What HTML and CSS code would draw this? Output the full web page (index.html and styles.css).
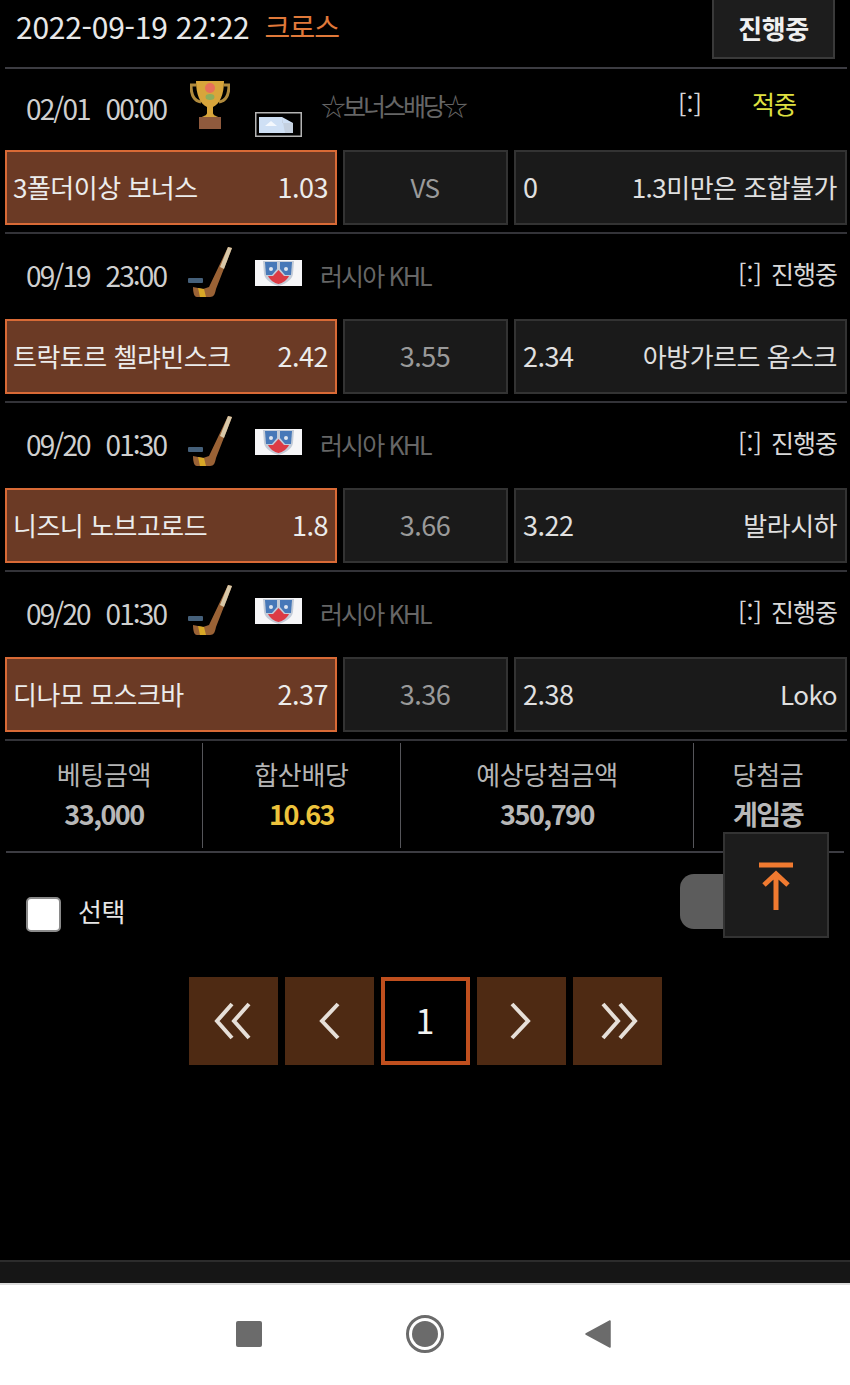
FILE: index.html
```html
<!DOCTYPE html>
<html lang="ko">
<head>
<meta charset="utf-8">
<title>베팅내역</title>
<link rel="stylesheet" href="styles.css">
</head>
<body>
<svg class="defs" width="0" height="0" aria-hidden="true">
  <defs>
    <filter id="soft"><feGaussianBlur stdDeviation="0.6"/></filter>
    <symbol id="stick" viewBox="0 0 46 54">
      <g filter="url(#soft)">
        <rect x="0" y="31" width="15" height="5" rx="1" fill="#45607a"/>
        <path d="M40 0 L44 1 L28 42 C27 47 26 50 22 50 L9 50 C6 50 5 45 5 40 L15 42 L21 40 Z" fill="#9a6236"/>
        <path d="M40 0 L44 1 L36 22 L32 20 Z" fill="#d8c8a8"/>
        <path d="M10 41 L16 42 L18 50 L12 50 Z" fill="#d8a828"/>
      </g>
    </symbol>
    <symbol id="khl" viewBox="0 0 47 26">
      <rect width="47" height="26" fill="#f6f6f8"/>
      <g filter="url(#soft)">
        <path d="M8 1 L39 1 L38 14 C37 20 30 24 23.500 26 C17 24 10 20 9 14 Z" fill="#c4ccd8"/>
        <path d="M10 2 L22 2 L22 9 L17 15 L11 15 Z" fill="#4678b8"/>
        <path d="M25 2 L37 2 L36 15 L30 15 L25 9 Z" fill="#4678b8"/>
        <path d="M13 16 L18 16 L23.500 10 L29 16 L34 16 C32 20 28 23 23.500 24 C19 23 15 20 13 16 Z" fill="#dc3b45"/>
        <circle cx="16" cy="9" r="2" fill="#dfe6f0"/>
        <circle cx="31" cy="9" r="2" fill="#dfe6f0"/>
      </g>
    </symbol>
  </defs>
</svg>
<div class="screen">
  <main class="page">
    <header class="top">
      <div class="top-title"><span class="stamp">2022-09-19 22:22</span><span class="kind">크로스</span></div>
      <div class="state-btn">진행중</div>
    </header>

    <section class="game game-bonus">
      <div class="meta">
        <span class="when">02/01&nbsp; 00:00</span>
        <svg class="sport trophy" viewBox="0 0 40 50" aria-hidden="true">
          <g filter="url(#soft)">
            <path d="M6 5 H1 C1 15 4 21 11 22 M34 5 H39 C39 15 36 21 29 22" fill="none" stroke="#b08a3c" stroke-width="3"/>
            <path d="M6 1 H34 C34 14 30 24 23 27 L23 33 C23 35 26 36 28 37 H12 C14 36 17 35 17 33 L17 27 C10 24 6 14 6 1 Z" fill="#d8a53a"/>
            <circle cx="20" cy="8" r="5" fill="#e8705a"/>
            <ellipse cx="20" cy="17" rx="4.500" ry="3" fill="#8cae5c"/>
            <rect x="9" y="37" width="22" height="12" fill="#8f5a3e"/>
          </g>
        </svg>
        <svg class="flag flag-broken" viewBox="0 0 47 25" aria-hidden="true">
          <rect x="0.750" y="0.750" width="45.500" height="23.500" fill="#000" stroke="#b4b4b4" stroke-width="1.500"/>
          <g filter="url(#soft)">
            <path d="M4 5 H27 L38 11 V21 H4 Z" fill="#cfe0f5"/>
            <path d="M27 5 L27 11 L38 11 L38 21 L30 21 Z" fill="#bcc4d0" opacity="0.600"/>
            <path d="M10 14 L16 9 L22 14 Z" fill="#f4f8fd"/>
          </g>
        </svg>
        <span class="league league-bonus">☆보너스배당☆</span>
        <span class="score score-bonus">[:]</span>
        <span class="status status-hit">적중</span>
      </div>
      <div class="odds">
        <div class="cell cell-home"><span>3폴더이상 보너스</span><span class="num">1.03</span></div>
        <div class="cell cell-draw">VS</div>
        <div class="cell cell-away"><span class="num">0</span><span>1.3미만은 조합불가</span></div>
      </div>
    </section>

    <section class="game">
      <div class="meta">
        <span class="when">09/19&nbsp; 23:00</span>
        <svg class="sport stick" aria-hidden="true"><use href="#stick"/></svg>
        <svg class="flag" aria-hidden="true"><use href="#khl"/></svg>
        <span class="league">러시아 KHL</span>
        <span class="score">[:]</span>
        <span class="status">진행중</span>
      </div>
      <div class="odds">
        <div class="cell cell-home"><span>트락토르 첼랴빈스크</span><span class="num">2.42</span></div>
        <div class="cell cell-draw num">3.55</div>
        <div class="cell cell-away"><span class="num">2.34</span><span>아방가르드 옴스크</span></div>
      </div>
    </section>

    <section class="game">
      <div class="meta">
        <span class="when">09/20&nbsp; 01:30</span>
        <svg class="sport stick" aria-hidden="true"><use href="#stick"/></svg>
        <svg class="flag" aria-hidden="true"><use href="#khl"/></svg>
        <span class="league">러시아 KHL</span>
        <span class="score">[:]</span>
        <span class="status">진행중</span>
      </div>
      <div class="odds">
        <div class="cell cell-home"><span>니즈니 노브고로드</span><span class="num">1.8</span></div>
        <div class="cell cell-draw num">3.66</div>
        <div class="cell cell-away"><span class="num">3.22</span><span>발라시하</span></div>
      </div>
    </section>

    <section class="game">
      <div class="meta">
        <span class="when">09/20&nbsp; 01:30</span>
        <svg class="sport stick" aria-hidden="true"><use href="#stick"/></svg>
        <svg class="flag" aria-hidden="true"><use href="#khl"/></svg>
        <span class="league">러시아 KHL</span>
        <span class="score">[:]</span>
        <span class="status">진행중</span>
      </div>
      <div class="odds">
        <div class="cell cell-home"><span>디나모 모스크바</span><span class="num">2.37</span></div>
        <div class="cell cell-draw num">3.36</div>
        <div class="cell cell-away"><span class="num">2.38</span><span>Loko</span></div>
      </div>
    </section>

    <section class="summary">
      <div class="sum"><div class="sum-label">베팅금액</div><div class="sum-value">33,000</div></div>
      <div class="sum"><div class="sum-label">합산배당</div><div class="sum-value sum-gold">10.63</div></div>
      <div class="sum"><div class="sum-label">예상당첨금액</div><div class="sum-value">350,790</div></div>
      <div class="sum"><div class="sum-label">당첨금</div><div class="sum-value">게임중</div></div>
    </section>

    <section class="actions">
      <label class="pick"><span class="box"></span><span class="pick-text">선택</span></label>
      <div class="toggle"></div>
    </section>

    <nav class="pager">
      <div class="pg"><svg viewBox="0 0 36 36" aria-hidden="true"><path d="M17 1 L2 18 L17 35 M34 1 L19 18 L34 35"/></svg></div>
      <div class="pg"><svg viewBox="0 0 36 36" aria-hidden="true"><path d="M27 1 L11 18 L27 35"/></svg></div>
      <div class="pg pg-on">1</div>
      <div class="pg"><svg viewBox="0 0 36 36" aria-hidden="true"><path d="M9 1 L25 18 L9 35"/></svg></div>
      <div class="pg"><svg viewBox="0 0 36 36" aria-hidden="true"><path d="M4 1 L19 18 L4 35 M21 1 L36 18 L21 35"/></svg></div>
    </nav>

    <div class="totop">
      <svg viewBox="0 0 36 50" aria-hidden="true">
        <path d="M1 5 H35 M18 50 V16 M6 25 L18 14 L30 25"/>
      </svg>
    </div>
  </main>
  <div class="footer-bar"></div>
  <div class="android-nav">
    <svg class="nav-ico" viewBox="0 0 26 26" aria-hidden="true"><rect width="26" height="26" rx="2" fill="#6b6b6b"/></svg>
    <svg class="nav-ico nav-home" viewBox="0 0 40 40" aria-hidden="true"><circle cx="20" cy="20" r="17.500" fill="none" stroke="#6b6b6b" stroke-width="3"/><circle cx="20" cy="20" r="13" fill="#6b6b6b"/></svg>
    <svg class="nav-ico nav-back" viewBox="0 0 26 30" aria-hidden="true"><path d="M25 2 V28 L1 15 Z" fill="#6b6b6b" stroke="#6b6b6b" stroke-width="1.500" stroke-linejoin="round"/></svg>
  </div>
</div>
</body>
</html>
```

FILE: styles.css
```css
* { box-sizing: border-box; }
html, body { margin: 0; padding: 0; background: #000; }
body { font-family: "Noto Sans CJK KR", "Noto Sans", sans-serif; color: #e6e6e6; }
.defs { position: absolute; }
.screen { width: 850px; height: 1385px; display: flex; flex-direction: column; overflow: hidden; }
.page { position: relative; flex: 1; background: #000; padding: 0 3px 0 5px; }

.top { height: 69px; display: flex; justify-content: space-between; border-bottom: 2px solid #3c3c42; padding-right: 12px; }
.top-title { display: flex; gap: 15px; align-items: center; height: 52px; padding-left: 11px; }
.stamp { color: #e8e8e8; font-size: 30px; letter-spacing: -0.25px; }
.kind { color: #e0793a; font-size: 28px; letter-spacing: -0.8px; }
.state-btn { width: 123px; height: 59px; display: flex; align-items: center; justify-content: center; padding-bottom: 2px; background: #1d1d1d; border: 2px solid #3a3a3a; border-top: 0; color: #f0f0f0; font-size: 26px; font-weight: 700; letter-spacing: -0.5px; }

.game { border-bottom: 2px solid #333338; padding-bottom: 7px; }
.meta { height: 85px; display: flex; align-items: center; padding: 0 10px 3px 21px; }
.game-bonus .meta { height: 81px; }
.when { width: 162px; font-size: 28px; letter-spacing: -1.9px; word-spacing: 2px; color: #cfcfcf; flex: none; }
.sport { flex: none; }
.trophy { width: 40px; height: 50px; margin: -7px 0 0 2px; }
.stick { width: 46px; height: 54px; margin: -2px 0 0 0; }
.flag { width: 47px; height: 26px; margin: -5px 0 0 21px; flex: none; }
.trophy + .flag { height: 25px; margin: 32px 0 0 25px; }
.league { margin-left: 18px; font-size: 25px; letter-spacing: -1.9px; color: #666; }
.league-bonus { margin-left: 19px; margin-top: -6px; letter-spacing: -3px; }
.score { margin-left: auto; margin-top: -4px; font-size: 25px; color: #d8d8d8; }
.status { margin-left: 9px; margin-top: -4px; font-size: 25px; letter-spacing: -1px; color: #d8d8d8; }
.score-bonus { margin-right: 50px; margin-top: -11px; }
.status-hit { color: #dfe040; margin-right: 41px; margin-left: 0; margin-top: -11px; }

.odds { display: grid; grid-template-columns: 332px 165px 333px; gap: 6px; }
.cell { height: 75px; display: flex; align-items: center; justify-content: space-between; padding: 0 8px 2px 7px; font-size: 26px; letter-spacing: -0.5px; background: #1a1a1a; border: 2px solid #333; color: #e0e0e0; }
.num { font-size: 27px; }
.cell-home { padding: 0 7px 2px 6px; background: #6b3a25; border-color: #d96a36; color: #ececec; }
.cell-draw { justify-content: center; color: #9a9a9a; }

.summary { display: grid; grid-template-columns: 197px 198px 293px 151px; margin: 2px 3px 0 1px; border-bottom: 2px solid #3c3c42; height: 110px; }
.sum { height: 105px; padding-top: 11px; text-align: center; border-right: 1px solid #55555a; }
.sum:last-child { border-right: 0; padding-right: 3px; }
.sum-label { font-size: 26px; line-height: 40px; letter-spacing: -0.3px; color: #b5b5b5; }
.sum-value { font-size: 27px; line-height: 39px; font-weight: 700; letter-spacing: -1.5px; color: #b8b8b8; }
.sum-gold { color: #edc33c; }

.actions { height: 124px; display: flex; align-items: flex-start; justify-content: space-between; padding-left: 21px; }
.pick { display: flex; align-items: center; gap: 17px; margin-top: 39px; font-size: 26px; letter-spacing: -0.5px; color: #e6e6e6; }
.pick-text { padding-bottom: 8px; }
.box { width: 35px; height: 35px; border-radius: 5px; background: #fff; border: 2px solid #8a8a8a; }
.toggle { width: 145px; height: 55px; margin: 21px 22px 0 0; border-radius: 14px; background: #5c5c5c; }

.pager { display: flex; justify-content: center; gap: 7px; padding-right: 2px; }
.pg { width: 89px; height: 88px; display: flex; align-items: center; justify-content: center; background: #4e2a13; color: #f2f2f2; font-size: 34px; }
.pg svg { width: 36px; height: 36px; fill: none; stroke: #e6dfd8; stroke-width: 4; overflow: visible; }
.pg-on { background: #000; border: 4px solid #bf4f1e; padding-bottom: 4px; }

.totop { position: absolute; left: 723px; top: 832px; width: 106px; height: 106px; display: flex; align-items: center; justify-content: center; background: #1c1c1c; border: 2px solid #333; }
.totop svg { width: 36px; height: 50px; fill: none; stroke: #f07a30; stroke-width: 5; }

.footer-bar { height: 23px; flex: none; background: #161616; border-top: 2px solid #2c2c2c; }
.android-nav { height: 102px; flex: none; display: flex; align-items: center; justify-content: center; gap: 143px; padding: 0 4px 2px 0; background: #fff; border-top: 2px solid #dcdcdc; }
.nav-ico { width: 26px; height: 30px; }
.nav-home { width: 40px; height: 40px; }
.nav-back { margin-left: -3px; }
```
